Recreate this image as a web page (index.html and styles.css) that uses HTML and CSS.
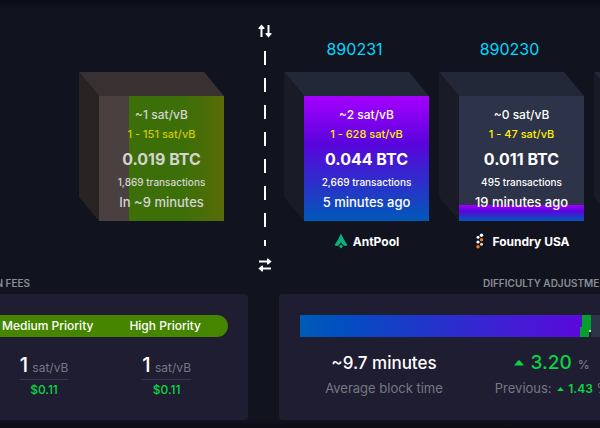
FILE: index.html
```
<!DOCTYPE html>
<html lang="en">
<head>
<meta charset="utf-8">
<title>Mempool blocks</title>
<link rel="stylesheet" href="styles.css">
</head>
<body>
<main class="page">
  <section class="chain">
    <div class="pending">
      <article class="block block-pending">
        <div class="cube">
          <div class="face">
            <span class="rate">~1 sat/vB</span>
            <span class="range">1 - 151 sat/vB</span>
            <strong class="total">0.019 BTC</strong>
            <span class="count">1,869 transactions</span>
            <span class="time">In ~9 minutes</span>
          </div>
        </div>
      </article>
    </div>
    <div class="divider">
      <button class="toggle" aria-label="Flip direction">
        <svg width="14" height="14" viewBox="0 0 14 14"><path d="M3.500 13V3M10.500 1v10" stroke="#fff" stroke-width="2" fill="none"/><path d="M.2 4.200 3.500.4l3.300 3.800-.8.800H1zM7.200 9.800l.8-.8h5l.8.8-3.300 3.800z" fill="#fff"/></svg>
      </button>
      <div class="dashes"></div>
      <button class="toggle" aria-label="Swap sides">
        <svg width="14" height="14" viewBox="0 0 14 14"><path d="M1 3.500h10M3 10.500h10" stroke="#fff" stroke-width="2" fill="none"/><path d="M9.800.2 13.600 3.500 9.800 6.800 9 6V1zM4.200 7.200l.8.800v5l-.8.8L.4 10.500z" fill="#fff"/></svg>
      </button>
    </div>
    <div class="mined">
      <article class="block">
        <a class="height" href="#">890231</a>
        <div class="cube">
          <div class="face face-full">
            <span class="rate">~2 sat/vB</span>
            <span class="range">1 - 628 sat/vB</span>
            <strong class="total">0.044 BTC</strong>
            <span class="count">2,669 transactions</span>
            <span class="time">5 minutes ago</span>
          </div>
        </div>
        <a class="pool" href="#">
          <svg width="14" height="16" viewBox="0 0 14 16"><path d="M7 0.5c1.500 3.500 4 8 6.500 11.800-1.800.9-3 .8-4 .2L7 9.500l-2.500 3c-1 .6-2.200.7-4-.2C3 8.500 5.500 4 7 .5z" fill="#0bb07b"/><path d="M7 11.200 9 13.300 7 15.500 5 13.300z" fill="#0bb07b"/></svg>
          AntPool
        </a>
      </article>
      <article class="block">
        <a class="height" href="#">890230</a>
        <div class="cube">
          <div class="face face-low">
            <span class="rate">~0 sat/vB</span>
            <span class="range">1 - 47 sat/vB</span>
            <strong class="total">0.011 BTC</strong>
            <span class="count">495 transactions</span>
            <span class="time">19 minutes ago</span>
          </div>
        </div>
        <a class="pool" href="#">
          <svg width="14" height="16" viewBox="0 0 14 16"><g fill="#fff"><circle cx="8.500" cy="2.200" r="1.700"/><circle cx="5" cy="4.300" r="1.500"/><circle cx="5" cy="9" r="1.600"/></g><circle cx="8.500" cy="11.300" r="1.500" fill="#ddd"/><g fill="#f27a12"><circle cx="8.500" cy="6.700" r="1.700"/><circle cx="5" cy="13.700" r="1.800"/></g></svg>
          Foundry USA
        </a>
      </article>
      <article class="block">
        <div class="cube"><div class="face"></div></div>
      </article>
    </div>
  </section>

  <section class="dashboard">
    <div class="column column-fees">
      <h2 class="title">TRANSACTION FEES</h2>
      <div class="card card-fees">
        <div class="pill"><span>Medium Priority</span><span>High Priority</span></div>
        <div class="fees">
          <div class="fee"><div class="sats"><b>1</b> sat/vB</div><div class="fiat">$0.11</div></div>
          <div class="fee"><div class="sats"><b>1</b> sat/vB</div><div class="fiat">$0.11</div></div>
        </div>
      </div>
    </div>
    <div class="column column-difficulty">
      <h2 class="title">DIFFICULTY ADJUSTMENT</h2>
      <div class="card card-difficulty">
        <div class="progress">
          <div class="mined-part"></div>
          <svg class="marker" width="11" height="22" viewBox="0 0 11 22" shape-rendering="crispEdges"><path d="M0 0h2v12H0z" fill="#5a09dc"/><path d="M2 0h9v15H9v7H0V12h2z" fill="#069e2d"/><path d="M9 15h2v2H9z" fill="#ccc"/></svg>
          <div class="rest"></div>
        </div>
        <div class="stats">
          <div class="stat"><div class="value">~9.7 minutes</div><div class="note">Average block time</div></div>
          <div class="stat">
            <div class="value change"><svg width="10" height="6" viewBox="0 0 10 6"><path d="M0 5.500 4.200.6q.8-.7 1.600 0L10 5.500z" fill="#09d543"/></svg><b>3.20</b><small>%</small></div>
            <div class="note previous">Previous: <svg width="7" height="4" viewBox="0 0 10 6"><path d="M0 6 5 0l5 6z" fill="#09d543"/></svg><b>1.43</b> %</div>
          </div>
        </div>
      </div>
    </div>
  </section>
</main>
</body>
</html>
```
FILE: styles.css
```
* { box-sizing: border-box; }
body {
  margin: 0;
  background: #11131f;
  color: #fff;
  font-family: Inter, "Liberation Sans", sans-serif;
  font-size: 12px;
  overflow: hidden;
}
a { text-decoration: none; }
.page {
  min-height: 100vh;
  padding-top: 24px;
  background: linear-gradient(#0b0c15, #11131f 10px, #11131f calc(100% - 10px), #0b0c15);
}
.chain { display: flex; height: 248px; }
.pending {
  flex: 0 0 44%;
  display: flex;
  justify-content: flex-end;
  padding-right: 40px;
}
.divider {
  width: 2px;
  display: flex;
  flex-direction: column;
  align-items: center;
}
.toggle {
  display: flex;
  padding: 0;
  border: 0;
  background: none;
}
.dashes {
  flex: 1;
  width: 2px;
  margin: 13px 0 12px;
  background: repeating-linear-gradient(#fff 0 14px, transparent 14px 27px);
}
.mined {
  flex: 1;
  min-width: 0;
  display: flex;
  gap: 10px;
  padding-left: 18px;
  overflow: hidden;
}
.block {
  flex: none;
  width: 145px;
  display: grid;
  grid-template-rows: 48px 149px 1fr;
}
.height {
  padding: 13px 4px 0 0;
  color: #00d9ff;
  font-size: 16px;
  line-height: 24px;
  text-align: center;
}
.cube {
  grid-row: 2;
  position: relative;
  padding: 24px 0 0 20px;
}
.cube::before, .cube::after { content: ""; position: absolute; inset: 0; }
.cube::before {
  background: #232839;
  clip-path: polygon(0 0, 125px 0, 100% 24px, 20px 24px);
}
.cube::after {
  background: #191c27;
  clip-path: polygon(0 0, 20px 24px, 20px 100%, 0 125px);
}
.block-pending .cube::before { background: #393131; }
.block-pending .cube::after { background: #282424; }
.face {
  position: relative;
  height: 125px;
  padding-top: 9px;
  display: flex;
  flex-direction: column;
  align-items: center;
  background: #2d3348;
  font-weight: 500;
}
.block-pending .face {
  color: #d4d4d4;
  background: linear-gradient(90deg, #4a403f 24%, #3d6f08 24%, #3d6f08 68%, #586b08);
}
.face-full { background: linear-gradient(#a500ff, #5a04dd 38%, #0059b8); }
.face-low { background: linear-gradient(#2d3348 109px, #a500ff 109px, #5a04dd 115px, #0059b8); }
.rate { line-height: 20px; }
.range { font-size: 11px; line-height: 18px; color: #fff000; }
.block-pending .range { color: #d2c800; }
.total { font-size: 16px; line-height: 32px; }
.count { font-size: 10px; line-height: 14px; }
.time { font-size: 13px; line-height: 26px; }
.pool {
  display: flex;
  justify-content: center;
  gap: 5px;
  padding: 12px 0 0 20px;
  height: 28px;
  color: #fff;
  font-weight: 700;
  line-height: 17px;
}
.dashboard { display: grid; grid-template-columns: 44% 56%; }
.column { min-width: 0; overflow: hidden; }
.column-fees { padding-right: 16px; }
.column-difficulty { padding-left: 15px; }
.title {
  margin: 0;
  height: 22px;
  color: #8b8c92;
  font-size: 10px;
  font-weight: 600;
  line-height: 22px;
  white-space: nowrap;
}
.column-fees .title {
  display: flex;
  justify-content: flex-end;
  padding-right: 218px;
}
.column-difficulty .title { padding-left: 204px; }
.card {
  height: 126px;
  padding-top: 21px;
  background: #1f1d31;
}
.card-fees { padding-right: 20px; border-radius: 0 4px 4px 0; }
.card-difficulty { padding-left: 21px; border-radius: 4px 0 0 4px; }
.pill {
  display: flex;
  justify-content: flex-end;
  gap: 36px;
  padding-right: 27px;
  border-radius: 0 11px 11px 0;
  background: #458500;
  font-weight: 500;
  line-height: 22px;
}
.fees {
  display: flex;
  justify-content: flex-end;
  gap: 74px;
  padding: 15px 37px 0 0;
}
.fee { text-align: center; }
.sats {
  height: 28px;
  border-bottom: 1px solid #37354a;
  color: #777783;
  line-height: 26px;
  white-space: nowrap;
}
.sats b { margin-right: 1px; color: #fff; font-size: 20px; font-weight: 500; }
.fiat { color: #09d543; font-weight: 500; line-height: 20px; }
.progress { display: flex; height: 22px; }
.mined-part { flex: 1; background: linear-gradient(90deg, #005bb5, #004fc0 13%, #5a09dc); }
.rest { width: 9px; background: #2d3348; }
.stats {
  display: grid;
  grid-template-columns: 1fr 1fr;
  width: 112%;
  padding-top: 13px;
  text-align: center;
}
.value { height: 26px; font-size: 17px; font-weight: 500; line-height: 26px; }
.note { color: #777783; font-size: 13px; line-height: 24px; }
.change {
  display: flex;
  justify-content: center;
  gap: 6px;
  align-items: baseline;
}
.change svg { align-self: center; }
.change b { color: #09d543; font-size: 19px; font-weight: 500; }
.change small { color: #777783; font-size: 12px; }
.previous { white-space: nowrap; }
.previous svg { margin: 0 4px 2px 2px; vertical-align: baseline; }
.previous b { color: #09d543; font-size: 12px; font-weight: 600; }
```
